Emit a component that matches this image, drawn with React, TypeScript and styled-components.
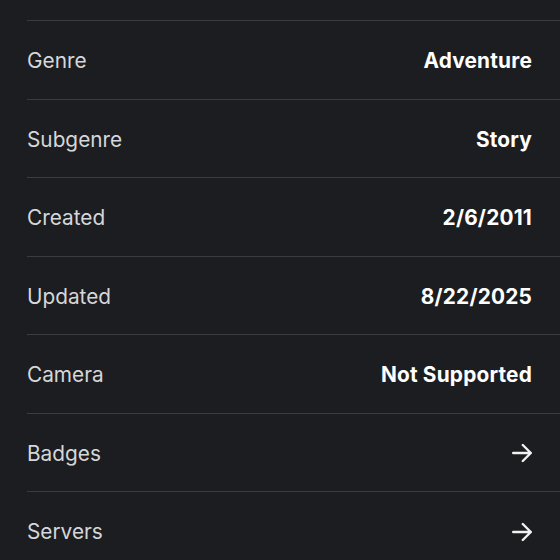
import styled, { createGlobalStyle } from "styled-components";

const GlobalStyle = createGlobalStyle`
  html, body {
    margin: 0;
    padding: 0;
    background: #1c1d21;
    overflow: hidden;
  }
`;

type Detail = { label: string; value?: string; link?: boolean };

const details: Detail[] = [
  { label: "Genre", value: "Adventure" },
  { label: "Subgenre", value: "Story" },
  { label: "Created", value: "2/6/2011" },
  { label: "Updated", value: "8/22/2025" },
  { label: "Camera", value: "Not Supported" },
  { label: "Badges", link: true },
  { label: "Servers", link: true },
];

const ArrowRight = () => (
  <svg width="20" height="20" viewBox="0 0 20 20" fill="none">
    <path
      d="M1.2 10h17.6M10.8 2 18.8 10l-8 8"
      stroke="#f2f2f3"
      strokeWidth="2.4"
      strokeLinecap="round"
      strokeLinejoin="round"
    />
  </svg>
);

const App = () => {
  return (
    <StPage>
      <GlobalStyle />
      <StList>
        {details.map((d) => (
          <StRow key={d.label}>
            <StLabel>{d.label}</StLabel>
            {d.link ? <ArrowRight /> : <StValue>{d.value}</StValue>}
          </StRow>
        ))}
      </StList>
    </StPage>
  );
};

const StPage = styled.div`
  width: 560px;
  height: 560px;
  overflow: hidden;
  background: #1c1d21;
  padding-top: 20px;
  box-sizing: border-box;
  font-family: Inter, "Noto Sans", sans-serif;
`;

const StList = styled.div`
  margin-left: 27px;
  display: flex;
  flex-direction: column;
`;

const StRow = styled.div`
  height: 78.5px;
  box-sizing: border-box;
  border-top: 1.5px solid #3b3c40;
  padding: 2px 28px 0 0;
  display: flex;
  align-items: center;
  justify-content: space-between;
`;

const StLabel = styled.span`
  font-size: 20.8px;
  color: #d6d7d9;
`;

const StValue = styled.span`
  font-size: 20.8px;
  font-weight: 700;
  letter-spacing: 0.2px;
  color: #ffffff;
`;

export default App;
